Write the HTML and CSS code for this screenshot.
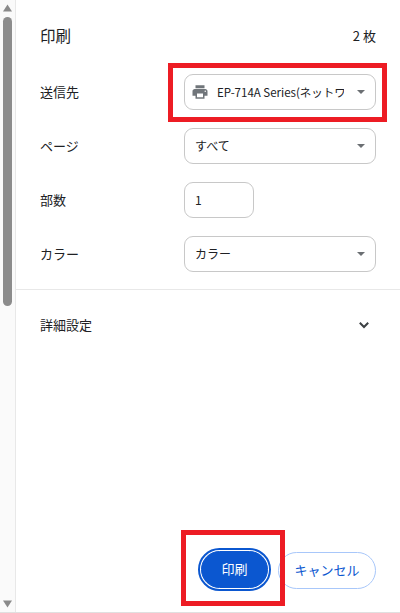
FILE: index.html
```html
<!DOCTYPE html>
<html lang="ja">
<head>
<meta charset="utf-8">
<title>印刷</title>
<link rel="stylesheet" href="styles.css">
</head>
<body>
<div class="app">
  <div class="scrollbar">
    <svg class="arrow" width="15" height="8" viewBox="0 0 15 8"><path d="M7.5 0.5 L12 7.5 H3 Z" fill="#8a8a8a"/></svg>
    <div class="thumb"></div>
    <svg class="arrow" width="15" height="8" viewBox="0 0 15 8"><path d="M3 0.5 H12 L7.5 7.5 Z" fill="#8a8a8a"/></svg>
  </div>
  <main class="panel">
    <header class="head"><h1>印刷</h1><span class="count">2 枚</span></header>
    <section class="settings">
      <div class="row">
        <label>送信先</label>
        <div class="field select printer">
          <svg class="printer-icon" width="18" height="18" viewBox="0 0 24 24"><path fill="#70757a" d="M19 8H5c-1.66 0-3 1.34-3 3v6h4v4h12v-4h4v-6c0-1.66-1.34-3-3-3zm-3 11H8v-5h8v5zm3-7c-.55 0-1-.45-1-1s.45-1 1-1 1 .45 1 1-.45 1-1 1zm-1-9H6v4h12V3z"/></svg>
          <span class="value clip">EP-714A Series(ネットワーク)</span>
          <i class="caret"></i>
        </div>
      </div>
      <div class="row">
        <label>ページ</label>
        <div class="field select"><span class="value">すべて</span><i class="caret"></i></div>
      </div>
      <div class="row">
        <label>部数</label>
        <div class="field copies"><span class="value">1</span></div>
      </div>
      <div class="row">
        <label>カラー</label>
        <div class="field select"><span class="value">カラー</span><i class="caret"></i></div>
      </div>
    </section>
    <section class="more">
      <span>詳細設定</span>
      <svg width="14" height="14" viewBox="0 0 14 14"><path d="M2.8 4.8 L7 9 L11.2 4.8" fill="none" stroke="#3c4043" stroke-width="2"/></svg>
    </section>
    <footer class="actions">
      <button class="btn primary">印刷</button>
      <button class="btn secondary">キャンセル</button>
    </footer>
  </main>
  <div class="mark mark-printer"></div>
  <div class="mark mark-print"></div>
</div>
</body>
</html>
```
FILE: styles.css
```css
* { box-sizing: border-box; }
html, body { margin: 0; height: 100%; background: #fff; }
body {
  font-family: "Noto Sans CJK JP", "Open Sans", sans-serif;
  color: #202124;
  font-size: 13px;
  overflow: hidden;
}
.app {
  position: relative;
  display: flex;
  width: 400px;
  height: 613px;
  border-bottom: 1px solid #e0e0e0;
}
.scrollbar {
  flex: 0 0 16px;
  display: flex;
  flex-direction: column;
  align-items: flex-start;
  padding-top: 4px;
  background: #fafafa;
  border-right: 1px solid #e8e8e8;
}
.arrow { flex: none; }
.thumb {
  width: 9px;
  height: 289px;
  margin: 5px 0 auto 3px;
  background: #8c8c8c;
  border-radius: 5px;
}
.scrollbar .arrow:last-child { margin-bottom: 4px; }
.panel {
  flex: 1;
  display: flex;
  flex-direction: column;
  min-width: 0;
}
.head {
  display: flex;
  justify-content: space-between;
  align-items: center;
  height: 74px;
  padding: 0 24px 4px 24px;
}
.head h1 { margin: 0; font-size: 15.5px; font-weight: 400; }
.count { font-size: 13px; }
.settings {
  display: flex;
  flex-direction: column;
  gap: 18px;
  padding: 0 24px 36px 24px;
  border-bottom: 1px solid #e8e8e8;
  height: 216px;
}
.row {
  display: flex;
  align-items: center;
  height: 36px;
}
.row label { flex: 0 0 144px; padding-bottom: 2px; }
.field {
  position: relative;
  display: flex;
  align-items: center;
  height: 36px;
  width: 192px;
  padding: 0 10px;
  border: 1px solid #c8c8c8;
  border-radius: 9px;
  background: #fff;
}
.copies { width: 70px; }
.printer { padding-left: 6px; }
.printer-icon { flex: none; margin-right: 8px; }
.value { font-size: 12px; white-space: nowrap; padding-bottom: 1px; }
.clip { overflow: hidden; width: 127px; font-size: 11.5px; }
.caret {
  position: absolute;
  right: 10px;
  top: 15px;
  width: 0;
  height: 0;
  border-left: 4px solid transparent;
  border-right: 4px solid transparent;
  border-top: 4px solid #6b6f73;
}
.more {
  display: flex;
  justify-content: space-between;
  align-items: center;
  height: 72px;
  padding: 0 29px 3px 24px;
}
.actions {
  margin-top: auto;
  display: flex;
  justify-content: flex-end;
  align-items: center;
  padding: 0 24px 23px 0;
}
.btn {
  height: 37px;
  border-radius: 19px;
  font-family: inherit;
  font-size: 13px;
  padding: 0 0 2px;
}
.primary {
  width: 67px;
  margin-bottom: 1px;
  background: #0b57d0;
  color: #fff;
  border: 1px solid #0b57d0;
  outline: 2px solid #0b57d0;
  outline-offset: 1px;
}
.secondary {
  width: 98px;
  margin-left: 10px;
  background: #fff;
  color: #0b57d0;
  border: 1px solid #a8c7fa;
}
.mark {
  position: absolute;
  border: 5px solid #ed1c24;
}
.mark-printer { left: 168px; top: 63px; width: 219px; height: 59px; }
.mark-print { left: 181px; top: 530px; width: 104px; height: 76px; }
```
